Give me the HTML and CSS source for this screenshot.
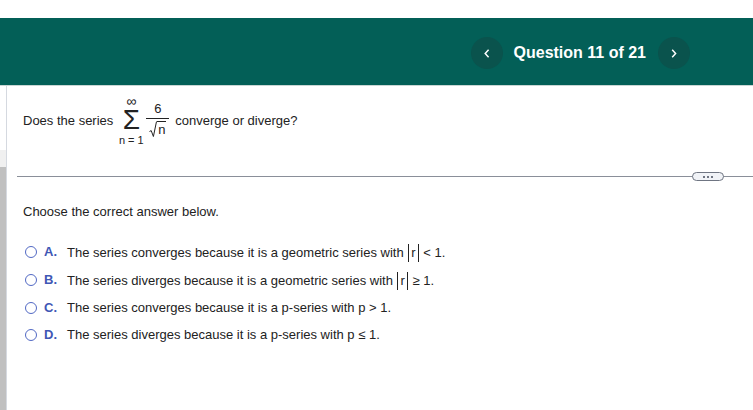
FILE: index.html
```html
<!DOCTYPE html>
<html lang="en">

<head>
    <meta charset="UTF-8">
    <meta name="viewport" content="width=device-width, initial-scale=1.0">
    <title>Question 11 of 21</title>
    <link rel="stylesheet" href="styles.css">
</head>

<body>
    <header class="topbar">
        <nav class="pager">
            <button class="pager-btn" aria-label="Previous">
                <svg width="6" height="9" viewBox="0 0 6 9"><path d="M4.6 0.8 1.2 4.5 4.6 8.2" /></svg>
            </button>
            <span class="pager-title">Question 11 of 21</span>
            <button class="pager-btn" aria-label="Next">
                <svg width="6" height="9" viewBox="0 0 6 9"><path d="M1.2 0.8 4.6 4.5 1.2 8.2" /></svg>
            </button>
        </nav>
    </header>

    <div class="layout">
        <aside class="side-strip">
            <div class="side-light"></div>
            <div class="side-grey"></div>
        </aside>

        <main class="content">
            <section class="question">
                <span>Does the series</span>
                <span class="sigma">
                    <span class="sigma-top">∞</span>
                    <span class="sigma-sign">Σ</span>
                    <span class="sigma-bottom">n = 1</span>
                </span>
                <span class="fraction">
                    <span class="numerator">6</span>
                    <span class="denominator">
                        <svg class="root" width="8" height="17" viewBox="0 0 8 17"><path d="M0.5 10.5 2.2 9.6 4.4 15.5 7.5 0.5" /></svg>
                        <span class="radicand">n</span>
                    </span>
                </span>
                <span>converge or diverge?</span>
            </section>

            <div class="divider">
                <button class="more-btn" aria-label="More"><i></i><i></i><i></i></button>
            </div>

            <p class="prompt">Choose the correct answer below.</p>

            <ul class="answers">
                <li class="answer answer-tall">
                    <span class="radio"></span>
                    <span class="letter">A.</span>
                    <span class="answer-text">The series converges because it is a geometric series with <span class="abs">r</span> &lt; 1.</span>
                </li>
                <li class="answer answer-tall">
                    <span class="radio"></span>
                    <span class="letter">B.</span>
                    <span class="answer-text">The series diverges because it is a geometric series with <span class="abs">r</span> ≥ 1.</span>
                </li>
                <li class="answer">
                    <span class="radio"></span>
                    <span class="letter">C.</span>
                    <span>The series converges because it is a p-series with p &gt; 1.</span>
                </li>
                <li class="answer">
                    <span class="radio"></span>
                    <span class="letter">D.</span>
                    <span>The series diverges because it is a p-series with p ≤ 1.</span>
                </li>
            </ul>
        </main>
    </div>
</body>

</html>
```

FILE: styles.css
```css
/* General Styles */
html,
body {
    height: 100%;
}

body {
    font-family: 'Liberation Sans', Arial, sans-serif;
    font-size: 13px;
    color: #222;
    background-color: #fff;
    margin: 0;
    padding: 18px 0 0;
    box-sizing: border-box;
    overflow: hidden;
    display: flex;
    flex-direction: column;
}

/* Top bar */
.topbar {
    height: 68px;
    flex-shrink: 0;
    background-color: #035f57;
    border-bottom: 1px solid #c9d6d4;
    box-sizing: border-box;
    display: flex;
    justify-content: flex-end;
    align-items: center;
    padding: 0 63px 0 0;
}

.pager {
    display: flex;
    align-items: center;
    gap: 11px;
    margin-top: 3px;
}

.pager-btn {
    width: 32px;
    height: 32px;
    border: none;
    border-radius: 50%;
    padding: 0;
    background-color: #0a534d;
    display: flex;
    align-items: center;
    justify-content: center;
}

.pager-btn path {
    fill: none;
    stroke: #fff;
    stroke-width: 1.5;
}

.pager-title {
    font-size: 16px;
    font-weight: bold;
    color: #fff;
    margin: 0 1px 0 0;
}

/* Left strip */
.layout {
    flex: 1;
    display: flex;
}

.side-strip {
    width: 6px;
    flex-shrink: 0;
    border-right: 1px solid #d5d9e0;
    display: flex;
    flex-direction: column;
    padding-top: 64px;
}

.side-light {
    height: 17px;
    background-color: #f0f0f0;
}

.side-grey {
    flex: 1;
    background-color: #c0c0c0;
}

/* Question */
.content {
    flex: 1;
    min-width: 0;
    padding-left: 10px;
}

.question {
    display: flex;
    align-items: center;
    height: 68px;
    padding-left: 6px;
}

.sigma {
    display: flex;
    flex-direction: column;
    align-items: center;
    width: 22px;
    margin: 0 4px 0 7px;
}

.sigma-top {
    font-size: 14px;
    height: 11px;
    line-height: 11px;
}

.sigma-sign {
    font-size: 28px;
    height: 26px;
    line-height: 26px;
}

.sigma-bottom {
    font-size: 11px;
    height: 10px;
    line-height: 10px;
    margin-top: 2px;
    white-space: nowrap;
}

.fraction {
    display: flex;
    flex-direction: column;
    align-items: center;
    width: 23px;
    margin-right: 6px;
}

.numerator {
    height: 17px;
    line-height: 16px;
    width: 100%;
    text-align: center;
    border-bottom: 1px solid #222;
}

.denominator {
    display: flex;
    height: 18px;
    margin-top: 2px;
}

.root {
    flex-shrink: 0;
}

.root path {
    fill: none;
    stroke: #222;
    stroke-width: 1;
}

.radicand {
    border-top: 1px solid #222;
    height: 16px;
    line-height: 16px;
    padding: 0 1px;
}

/* Divider */
.divider {
    height: 1px;
    margin-top: 22px;
    background-color: #8a8f99;
    display: flex;
    justify-content: flex-end;
    align-items: center;
    padding-right: 29px;
}

.more-btn {
    width: 30px;
    height: 7px;
    flex-shrink: 0;
    padding: 0;
    background-color: #f1f3f7;
    border: 1px solid #6f7582;
    border-radius: 5px;
    display: flex;
    justify-content: center;
    align-items: center;
    gap: 2px;
    box-sizing: content-box;
}

.more-btn i {
    width: 2px;
    height: 2px;
    background-color: #6f7582;
}

.prompt {
    margin: 28px 0 0 6px;
    line-height: 14px;
}

/* Answers */
.answers {
    list-style: none;
    margin: 19px 0 0 6px;
    padding: 0;
}

.answer {
    display: flex;
    align-items: center;
    height: 27px;
}

.answer-tall {
    height: 28px;
}

.answer-text {
    margin-top: 2px;
}

.radio {
    width: 10px;
    height: 10px;
    border: 1.5px solid #5269c4;
    border-radius: 50%;
    margin: 0 7px 0 2px;
    flex-shrink: 0;
}

.letter {
    width: 23px;
    margin-top: -1px;
    font-weight: bold;
    color: #3f57b5;
    flex-shrink: 0;
}

.abs {
    display: inline-block;
    border-left: 1px solid #222;
    border-right: 1px solid #222;
    line-height: 18px;
    padding: 0 2px;
    margin: 0 1px;
}
```
